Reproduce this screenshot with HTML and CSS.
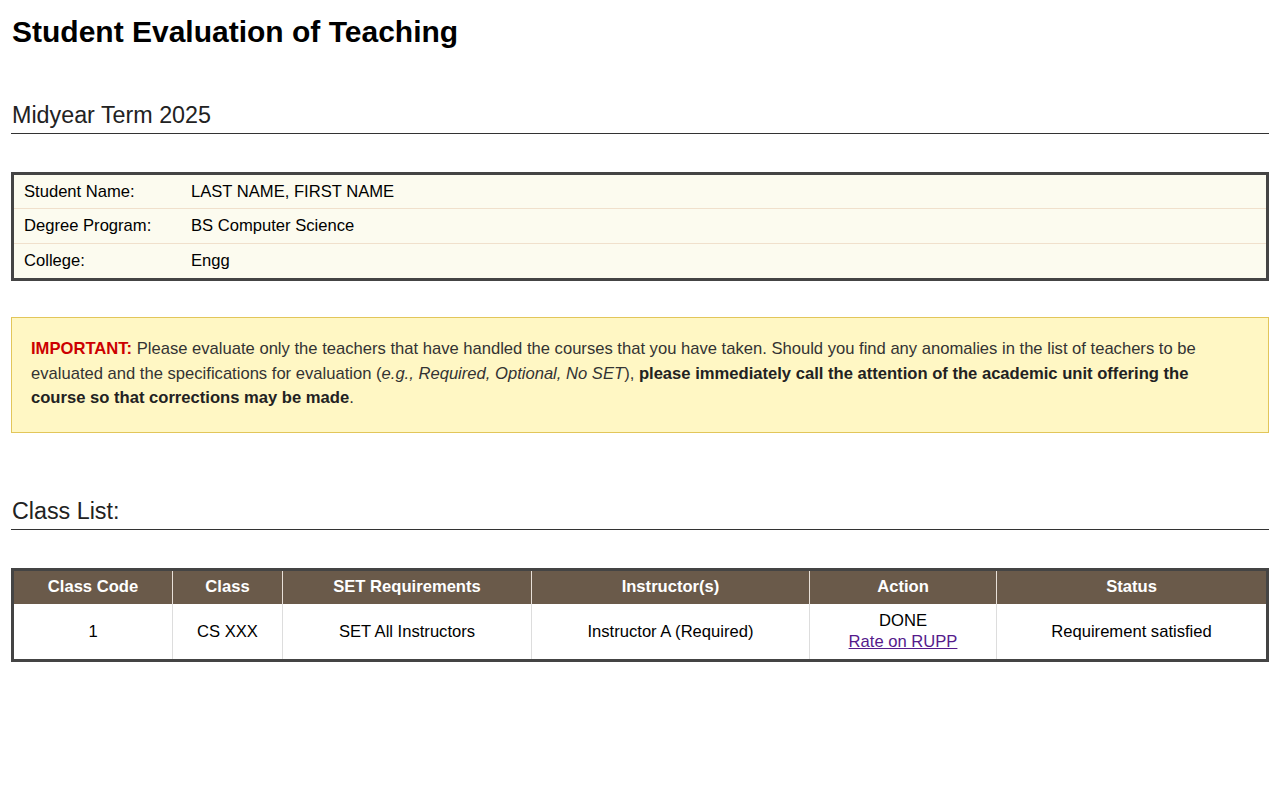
FILE: index.html
```html
<!DOCTYPE html>
<html lang="en">
<head>
<meta charset="utf-8">
<title>Student Evaluation of Teaching</title>
<link rel="stylesheet" href="styles.css">
</head>
<body>
<div class="page">
  <h1 class="title">Student Evaluation of Teaching</h1>

  <h2 class="section">Midyear Term 2025</h2>

  <table class="info">
    <tr><td class="label">Student Name:</td><td>LAST NAME, FIRST NAME</td></tr>
    <tr><td class="label">Degree Program:</td><td>BS Computer Science</td></tr>
    <tr><td class="label">College:</td><td>Engg</td></tr>
  </table>

  <div class="notice">
    <p><span class="imp">IMPORTANT:</span> Please evaluate only the teachers that have handled the courses that you have taken. Should you find any anomalies in the list of teachers to be evaluated and the specifications for evaluation (<em>e.g., Required, Optional, No SET</em>), <strong>please immediately call the attention of the academic unit offering the course so that corrections may be made</strong>.</p>
  </div>

  <h2 class="section classlist">Class List:</h2>

  <table class="classes">
    <thead>
      <tr>
        <th class="c1">Class Code</th>
        <th class="c2">Class</th>
        <th class="c3">SET Requirements</th>
        <th class="c4">Instructor(s)</th>
        <th class="c5">Action</th>
        <th class="c6">Status</th>
      </tr>
    </thead>
    <tbody>
      <tr>
        <td>1</td>
        <td>CS XXX</td>
        <td>SET All Instructors</td>
        <td>Instructor A (Required)</td>
        <td>DONE<br><a href="#" class="rate">Rate on RUPP</a></td>
        <td>Requirement satisfied</td>
      </tr>
    </tbody>
  </table>
</div>
</body>
</html>
```

FILE: styles.css
```css
html, body {
  margin: 0;
  padding: 0;
  background: #ffffff;
}
body {
  font-family: "Liberation Sans", Arial, sans-serif;
  font-size: 16.6px;
  color: #000;
}
.page {
  padding: 0 11px;
}
.title {
  margin: 0;
  padding-top: 14px;
  font-size: 30px;
  line-height: 36px;
  font-weight: bold;
  color: #000;
  padding-left: 1px;
}
.section {
  margin: 51px 0 0 0;
  font-size: 23.3px;
  font-weight: normal;
  line-height: 28px;
  color: #222;
  padding-left: 1px;
  padding-bottom: 4px;
  border-bottom: 1px solid #333;
}
.info {
  margin-top: 38px;
  width: 100%;
  border-collapse: collapse;
  border: 3px solid #444;
  background: #fcfbef;
}
.info td {
  height: 34px;
  padding: 0 10px;
  border-top: 1px solid #f0e0cc;
  font-size: 16.6px;
  color: #000;
}
.info tr:first-child td {
  border-top: none;
  height: 33px;
}
.info td.label {
  width: 147px;
}
.notice {
  margin-top: 36px;
  background: #fff7c4;
  border: 1px solid #e2c65a;
  padding: 19px 30px 21px 19px;
}
.notice p {
  margin: 0;
  font-size: 16.6px;
  line-height: 24.5px;
  color: #333;
}
.imp {
  color: #cc0000;
  font-weight: bold;
}
.notice strong {
  color: #222;
}
.classlist {
  margin-top: 64px;
}
.classes {
  margin-top: 38px;
  width: 100%;
  border-collapse: collapse;
  border: 3px solid #444;
  text-align: center;
}
.classes th {
  background: #6a5a4a;
  color: #fff;
  font-weight: bold;
  font-size: 16.6px;
  height: 33px;
  padding: 0 6px;
  border-left: 1px solid #e8e0d8;
}
.classes td {
  height: 55px;
  padding: 0 6px;
  font-size: 16.6px;
  line-height: 21px;
  color: #000;
  border-left: 1px solid #ddd;
}
.classes th:first-child,
.classes td:first-child {
  border-left: none;
}
.c1 { width: 146px; }
.c2 { width: 97px; }
.c3 { width: 236px; }
.c4 { width: 265px; }
.c5 { width: 174px; }
.rate {
  color: #551a8b;
  text-decoration: underline;
}
```
